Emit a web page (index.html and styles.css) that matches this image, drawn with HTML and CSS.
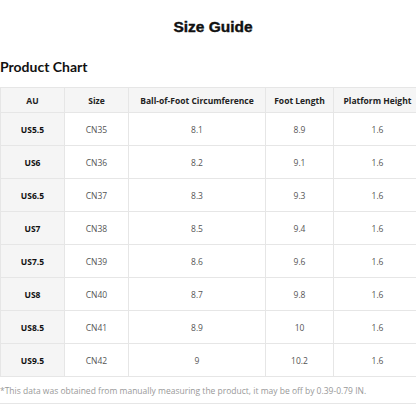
FILE: index.html
```html
<!DOCTYPE html>
<html>
<head>
  <meta charset="UTF-8">
  <title>Size Guide</title>
  <link rel="stylesheet" href="styles.css">
</head>
<body>
<div class="page">
  <h1 class="title">Size Guide</h1>
  <h2 class="subtitle">Product Chart</h2>
  <table class="chart">
    <colgroup>
      <col class="c-au">
      <col class="c-size">
      <col class="c-ball">
      <col class="c-foot">
      <col class="c-plat">
    </colgroup>
    <thead>
      <tr>
        <th>AU</th>
        <th>Size</th>
        <th>Ball-of-Foot Circumference</th>
        <th>Foot Length</th>
        <th>Platform Height</th>
      </tr>
    </thead>
    <tbody>
      <tr><th>US5.5</th><td>CN35</td><td>8.1</td><td>8.9</td><td>1.6</td></tr>
      <tr><th>US6</th><td>CN36</td><td>8.2</td><td>9.1</td><td>1.6</td></tr>
      <tr><th>US6.5</th><td>CN37</td><td>8.3</td><td>9.3</td><td>1.6</td></tr>
      <tr><th>US7</th><td>CN38</td><td>8.5</td><td>9.4</td><td>1.6</td></tr>
      <tr><th>US7.5</th><td>CN39</td><td>8.6</td><td>9.6</td><td>1.6</td></tr>
      <tr><th>US8</th><td>CN40</td><td>8.7</td><td>9.8</td><td>1.6</td></tr>
      <tr><th>US8.5</th><td>CN41</td><td>8.9</td><td>10</td><td>1.6</td></tr>
      <tr><th>US9.5</th><td>CN42</td><td>9</td><td>10.2</td><td>1.6</td></tr>
    </tbody>
  </table>
  <p class="note">*This data was obtained from manually measuring the product, it may be off by 0.39-0.79 IN.</p>
</div>
</body>
</html>
```

FILE: styles.css
```css
* {
  margin: 0;
  padding: 0;
  box-sizing: border-box;
}
html, body {
  overflow: hidden;
}
body {
  background: #fff;
  font-family: "Open Sans", "Noto Sans", sans-serif;
  color: #333;
}
.page {
  width: 421px;
}
.title {
  width: 416px;
  padding: 17px 0 0 10px;
  font-family: "Liberation Sans", Arial, sans-serif;
  font-size: 15.5px;
  font-weight: bold;
  color: #111;
  text-align: center;
  line-height: 20px;
  -webkit-text-stroke: 0.4px #111;
}
.subtitle {
  margin-top: 19px;
  font-family: Lato, "Open Sans", sans-serif;
  font-size: 14px;
  font-weight: bold;
  color: #111;
  line-height: 22px;
}
.chart {
  margin-top: 9px;
  width: 421px;
  border-collapse: collapse;
  table-layout: fixed;
  font-size: 8.5px;
}
.chart .c-au { width: 64px; }
.chart .c-size { width: 64px; }
.chart .c-ball { width: 137px; }
.chart .c-foot { width: 68px; }
.chart .c-plat { width: 88px; }
.chart th,
.chart td {
  border: 1px solid #e6e6e6;
  text-align: center;
  white-space: nowrap;
}
.chart thead th {
  height: 25px;
  background: #f5f5f5;
  font-weight: bold;
  color: #222;
}
.chart tbody tr {
  height: 33px;
}
.chart tbody th {
  background: #f5f5f5;
  font-weight: bold;
  color: #111;
}
.chart tbody td {
  color: #555;
}
.note {
  width: 416px;
  padding: 7px 0 6px;
  border-bottom: 1px solid #e6e6e6;
  font-size: 8.5px;
  color: #999;
  white-space: nowrap;
  line-height: 13px;
}
```
